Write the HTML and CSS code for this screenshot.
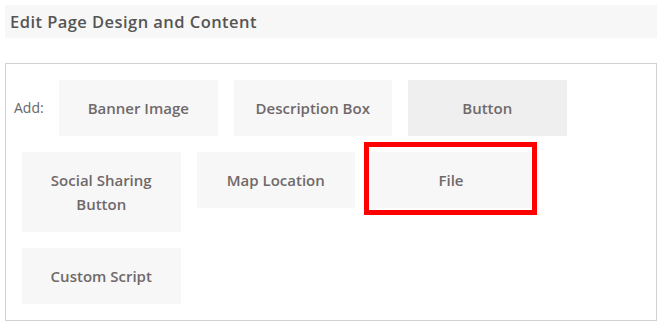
FILE: index.html
```html
<!DOCTYPE html>
<html>
<head>
<meta charset="utf-8">
<link rel="stylesheet" href="styles.css">
</head>
<body>
<div class="page">
  <div class="title-bar">Edit Page Design and Content</div>
  <div class="panel">
    <div class="items">
      <div class="add-label">Add:</div>
      <div class="item">Banner Image</div>
      <div class="item">Description Box</div>
      <div class="item item-active">Button</div>
      <div class="item">Social Sharing Button</div>
      <div class="item">Map Location</div>
      <div class="item item-file">File</div>
      <div class="item">Custom Script</div>
    </div>
    <div class="highlight"></div>
  </div>
</div>
</body>
</html>
```
FILE: styles.css
```css
html, body {
  margin: 0;
  padding: 0;
  background: #ffffff;
}
body {
  font-family: "Open Sans", "Liberation Sans", sans-serif;
}
.page {
  padding: 5px;
  width: 652px;
}
.title-bar {
  height: 33px;
  line-height: 34px;
  padding-left: 5px;
  background: #f7f7f7;
  color: #555555;
  font-size: 16.5px;
  font-weight: 600;
  letter-spacing: 0.45px;
}
.panel {
  position: relative;
  margin-top: 25px;
  border: 1px solid #d3d0d0;
  padding: 8px;
}
.items {
  display: flex;
  flex-wrap: wrap;
  align-items: flex-start;
}
.add-label {
  width: 37px;
  margin: 8px 0;
  padding: 16px 0;
  line-height: 24px;
  font-size: 14px;
  font-weight: 500;
  color: #666666;
}
.item {
  width: 158.5px;
  box-sizing: border-box;
  margin: 8px;
  padding: 16px 20px;
  line-height: 24px;
  background: #f7f7f7;
  color: #6f6969;
  font-size: 15px;
  font-weight: 600;
  text-align: center;
}
.item-active {
  background: #efefef;
}
.item-file {
  width: 160px;
}
.highlight {
  position: absolute;
  left: 358px;
  top: 78px;
  width: 173px;
  height: 73px;
  box-sizing: border-box;
  border: 5px solid #ff0000;
}
```
